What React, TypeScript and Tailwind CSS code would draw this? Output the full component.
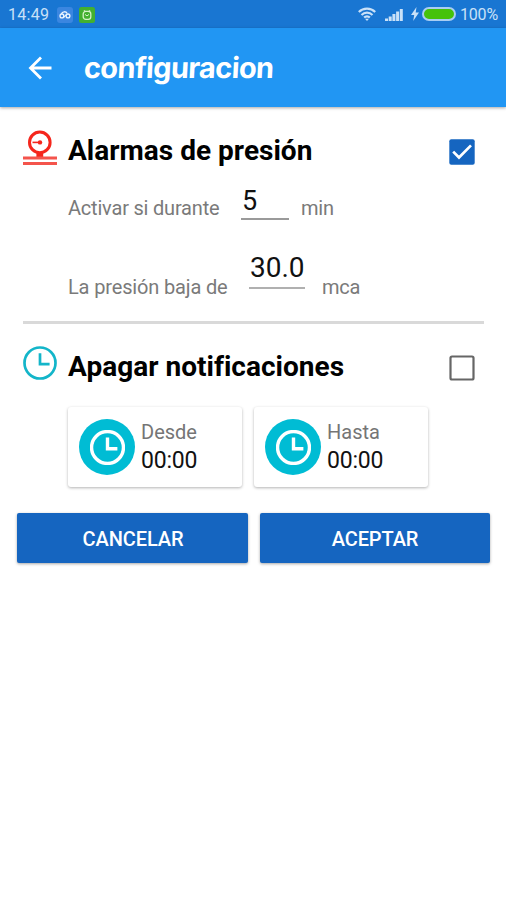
import type { ReactNode } from 'react';

function GaugeIcon() {
  return (
    <svg viewBox="0 0 34 36" className="mb-[7px] h-[36px] w-[34px] shrink-0" fill="none">
      <circle cx="16.8" cy="12.4" r="10.3" stroke="#f5261c" strokeWidth="3" />
      <path d="M9.5 12.4h9" stroke="#f5261c" strokeWidth="1.6" />
      <circle cx="17" cy="12.4" r="2.2" fill="#f5261c" />
      <path d="M13.4 23h6.8v4h-6.8z" fill="#f5261c" />
      <path d="M0 27.9h34M0 33.5h34" stroke="#f4544c" strokeWidth="3" />
    </svg>
  );
}

function ClockIcon({ className, weight = 2.7 }: { className: string; weight?: number }) {
  return (
    <svg viewBox="0 0 34 34" className={className} fill="none" stroke="currentColor" strokeWidth={weight}>
      <circle cx="17" cy="17" r="15.5" />
      <path d="M17 7.2V18.2H26.6" />
    </svg>
  );
}

function StatusBar() {
  return (
    <div className="flex h-[28px] items-center bg-[#1976d2] text-[16px] text-[#c9e1f8]">
      <span className="mt-[2px] ml-[8px] w-[42px] tracking-[0.3px]">14:49</span>
      <svg viewBox="0 0 16 16" className="mt-px ml-[7px] size-[16px]">
        <rect width="16" height="16" rx="3" fill="#3b86e0" />
        <circle cx="4.9" cy="8.9" r="1.9" fill="none" stroke="#eaf5ff" strokeWidth="1.3" />
        <circle cx="11" cy="8.9" r="1.9" fill="none" stroke="#eaf5ff" strokeWidth="1.3" />
        <path d="M4.4 7a3.1 3.1 0 0 1 5.8-.4M6.4 10.6l3-3" fill="none" stroke="#eaf5ff" strokeWidth="1.3" />
      </svg>
      <svg viewBox="0 0 16 16" className="mt-px ml-[6px] size-[16px]">
        <rect width="16" height="16" rx="2.5" fill="#43b02f" />
        <path d="M5 3.4l1.4 1.4M11 3.4L9.6 4.8" stroke="#d3f2c5" strokeWidth="1.3" />
        <rect x="4.2" y="4.4" width="7.6" height="8" rx="2.6" fill="none" stroke="#d3f2c5" strokeWidth="1.3" />
        <path d="M6 7.4l2 1.5 2-1.5" fill="none" stroke="#d3f2c5" />
      </svg>
      <div className="ml-auto flex items-center">
        <svg viewBox="0 0 18 14" className="h-[14px] w-[18px]" fill="none" stroke="#c9e1f8" strokeWidth="2.1">
          <path d="M.8 5a11.6 11.6 0 0 1 16.4 0M3.5 7.9a7.8 7.8 0 0 1 11 0M6.1 10.6a4.1 4.1 0 0 1 5.8 0" />
          <path d="M9 14l-2-2.2h4z" fill="#c9e1f8" stroke="none" />
        </svg>
        <svg viewBox="0 0 18 13" className="ml-[9px] h-[13px] w-[18px]" fill="#c9e1f8">
          <path d="M0 10.5h3V13H0zM3.7 8.5h3V13h-3zM7.4 6h3v7h-3zM11.1 3.5h3V13h-3zM14.8 1h3v12h-3z" />
        </svg>
        <svg viewBox="0 0 8 14" className="ml-[8px] h-[14px] w-[8px]" fill="#c9e1f8">
          <path d="M5.5 0L0 8h3.2L2.2 14 8 5.6H4.7z" />
        </svg>
        <div className="ml-[3px] h-[14px] w-[34px] rounded-full border-2 border-[#a9cdf2] bg-[#45c20a]" />
        <span className="mt-[2px] ml-[4px] w-[46px] tracking-[-0.2px]">100%</span>
      </div>
    </div>
  );
}

function AppBar() {
  return (
    <header className="flex h-[79px] items-center bg-[#2196f3] text-white shadow-[0_1px_3px_rgba(0,0,0,0.35)]">
      <svg viewBox="0 0 24 24" className="ml-[28px] size-[24px]" fill="none" stroke="currentColor" strokeWidth="2.8">
        <path d="M23.5 12H3M13 1.5L2.5 12 13 22.5" />
      </svg>
      <h1 className="mb-[1px] ml-[32px] origin-left -skew-x-3 font-['Inter'] text-[29px] leading-none font-bold tracking-[-0.65px]">
        configuracion
      </h1>
    </header>
  );
}

function Checkbox({ checked = false }: { checked?: boolean }) {
  return (
    <svg viewBox="0 0 26 26" className="mt-px ml-auto size-[26px]" fill="none">
      {checked ? (
        <>
          <rect x=".3" y=".3" width="25.4" height="25.4" rx="2" fill="#1565c0" />
          <path d="M4.2 12.6l5.8 5.9L22 6.4" stroke="#fff" strokeWidth="2.7" />
        </>
      ) : (
        <rect x="1.5" y="1.5" width="23" height="23" rx="1.5" stroke="#666" strokeWidth="2.2" />
      )}
    </svg>
  );
}

function SectionTitle({ children }: { children: ReactNode }) {
  return <h2 className="ml-[11px] text-[28px] leading-[34px] font-bold tracking-[0.02px] text-black">{children}</h2>;
}

function TimeCard({ label, value }: { label: string; value: string }) {
  return (
    <div className="flex h-[80px] w-[174px] items-center rounded-[3px] bg-white pl-[11px] shadow-[0_1px_3px_rgba(0,0,0,0.3)]">
      <div className="flex size-[56px] items-center justify-center rounded-full bg-[#00bcd4] text-white">
        <ClockIcon className="size-[35px]" weight={3.3} />
      </div>
      <div className="ml-[6px]">
        <div className="text-[20px] leading-[27px] text-[#757575]">{label}</div>
        <div className="text-[23px] leading-[29px] tracking-[-0.2px] text-[#111]">{value}</div>
      </div>
    </div>
  );
}

export default function App() {
  return (
    <div className="h-[900px] w-[506px] overflow-hidden bg-white font-['Roboto',sans-serif]">
      <StatusBar />
      <AppBar />

      <main>
        <section className="pt-[23px] pr-[31px] pl-[23px]">
          <div className="flex h-[42px] items-center">
            <GaugeIcon />
            <SectionTitle>Alarmas de presión</SectionTitle>
            <Checkbox checked />
          </div>
          <div className="mt-[12px] ml-[45px] flex h-[36px] items-end text-[20px] leading-[24px] text-[#7a7a7a]">
            <span className="w-[173px] tracking-[-0.2px]">Activar si durante</span>
            <div className="h-[35px] w-[48px] border-b-2 border-[#9a9a9a] pl-px text-[27px] leading-[32px] text-[#111]">5</div>
            <span className="ml-[12px] tracking-[-0.2px]">min</span>
          </div>
          <div className="mt-[37px] ml-[45px] flex h-[42px] items-end text-[20px] leading-[24px] text-[#7a7a7a]">
            <span className="w-[181px] tracking-[-0.15px]">La presión baja de</span>
            <div className="mb-[10px] h-[38px] w-[56px] border-b-2 border-[#b0b0b0] pl-px text-[28px] leading-[33px] text-[#111]">30.0</div>
            <span className="ml-[17px] tracking-[-0.2px]">mca</span>
          </div>
        </section>

        <hr className="mt-[22px] mr-[22px] ml-[23px] h-[3px] border-0 bg-[#d9d9d9]" />

        <section className="pt-[22px] pr-[31px] pl-[23px]">
          <div className="flex h-[42px] items-center">
            <ClockIcon className="mb-[9px] size-[34px] text-[#13b5c9]" />
            <SectionTitle>Apagar notificaciones</SectionTitle>
            <Checkbox />
          </div>
          <div className="mt-[19px] ml-[45px] flex gap-[12px]">
            <TimeCard label="Desde" value="00:00" />
            <TimeCard label="Hasta" value="00:00" />
          </div>
        </section>

        <div className="mt-[26px] flex gap-[12px] pr-[16px] pl-[17px] text-[20px] font-medium text-white">
          <button className="h-[50px] flex-1 rounded-[2px] bg-[#1565c0] pt-px pl-px tracking-[-0.1px] shadow-[0_1px_3px_rgba(0,0,0,0.35)]">
            CANCELAR
          </button>
          <button className="h-[50px] flex-1 rounded-[2px] bg-[#1565c0] pt-px tracking-[-0.1px] shadow-[0_1px_3px_rgba(0,0,0,0.35)]">
            ACEPTAR
          </button>
        </div>
      </main>
    </div>
  );
}
